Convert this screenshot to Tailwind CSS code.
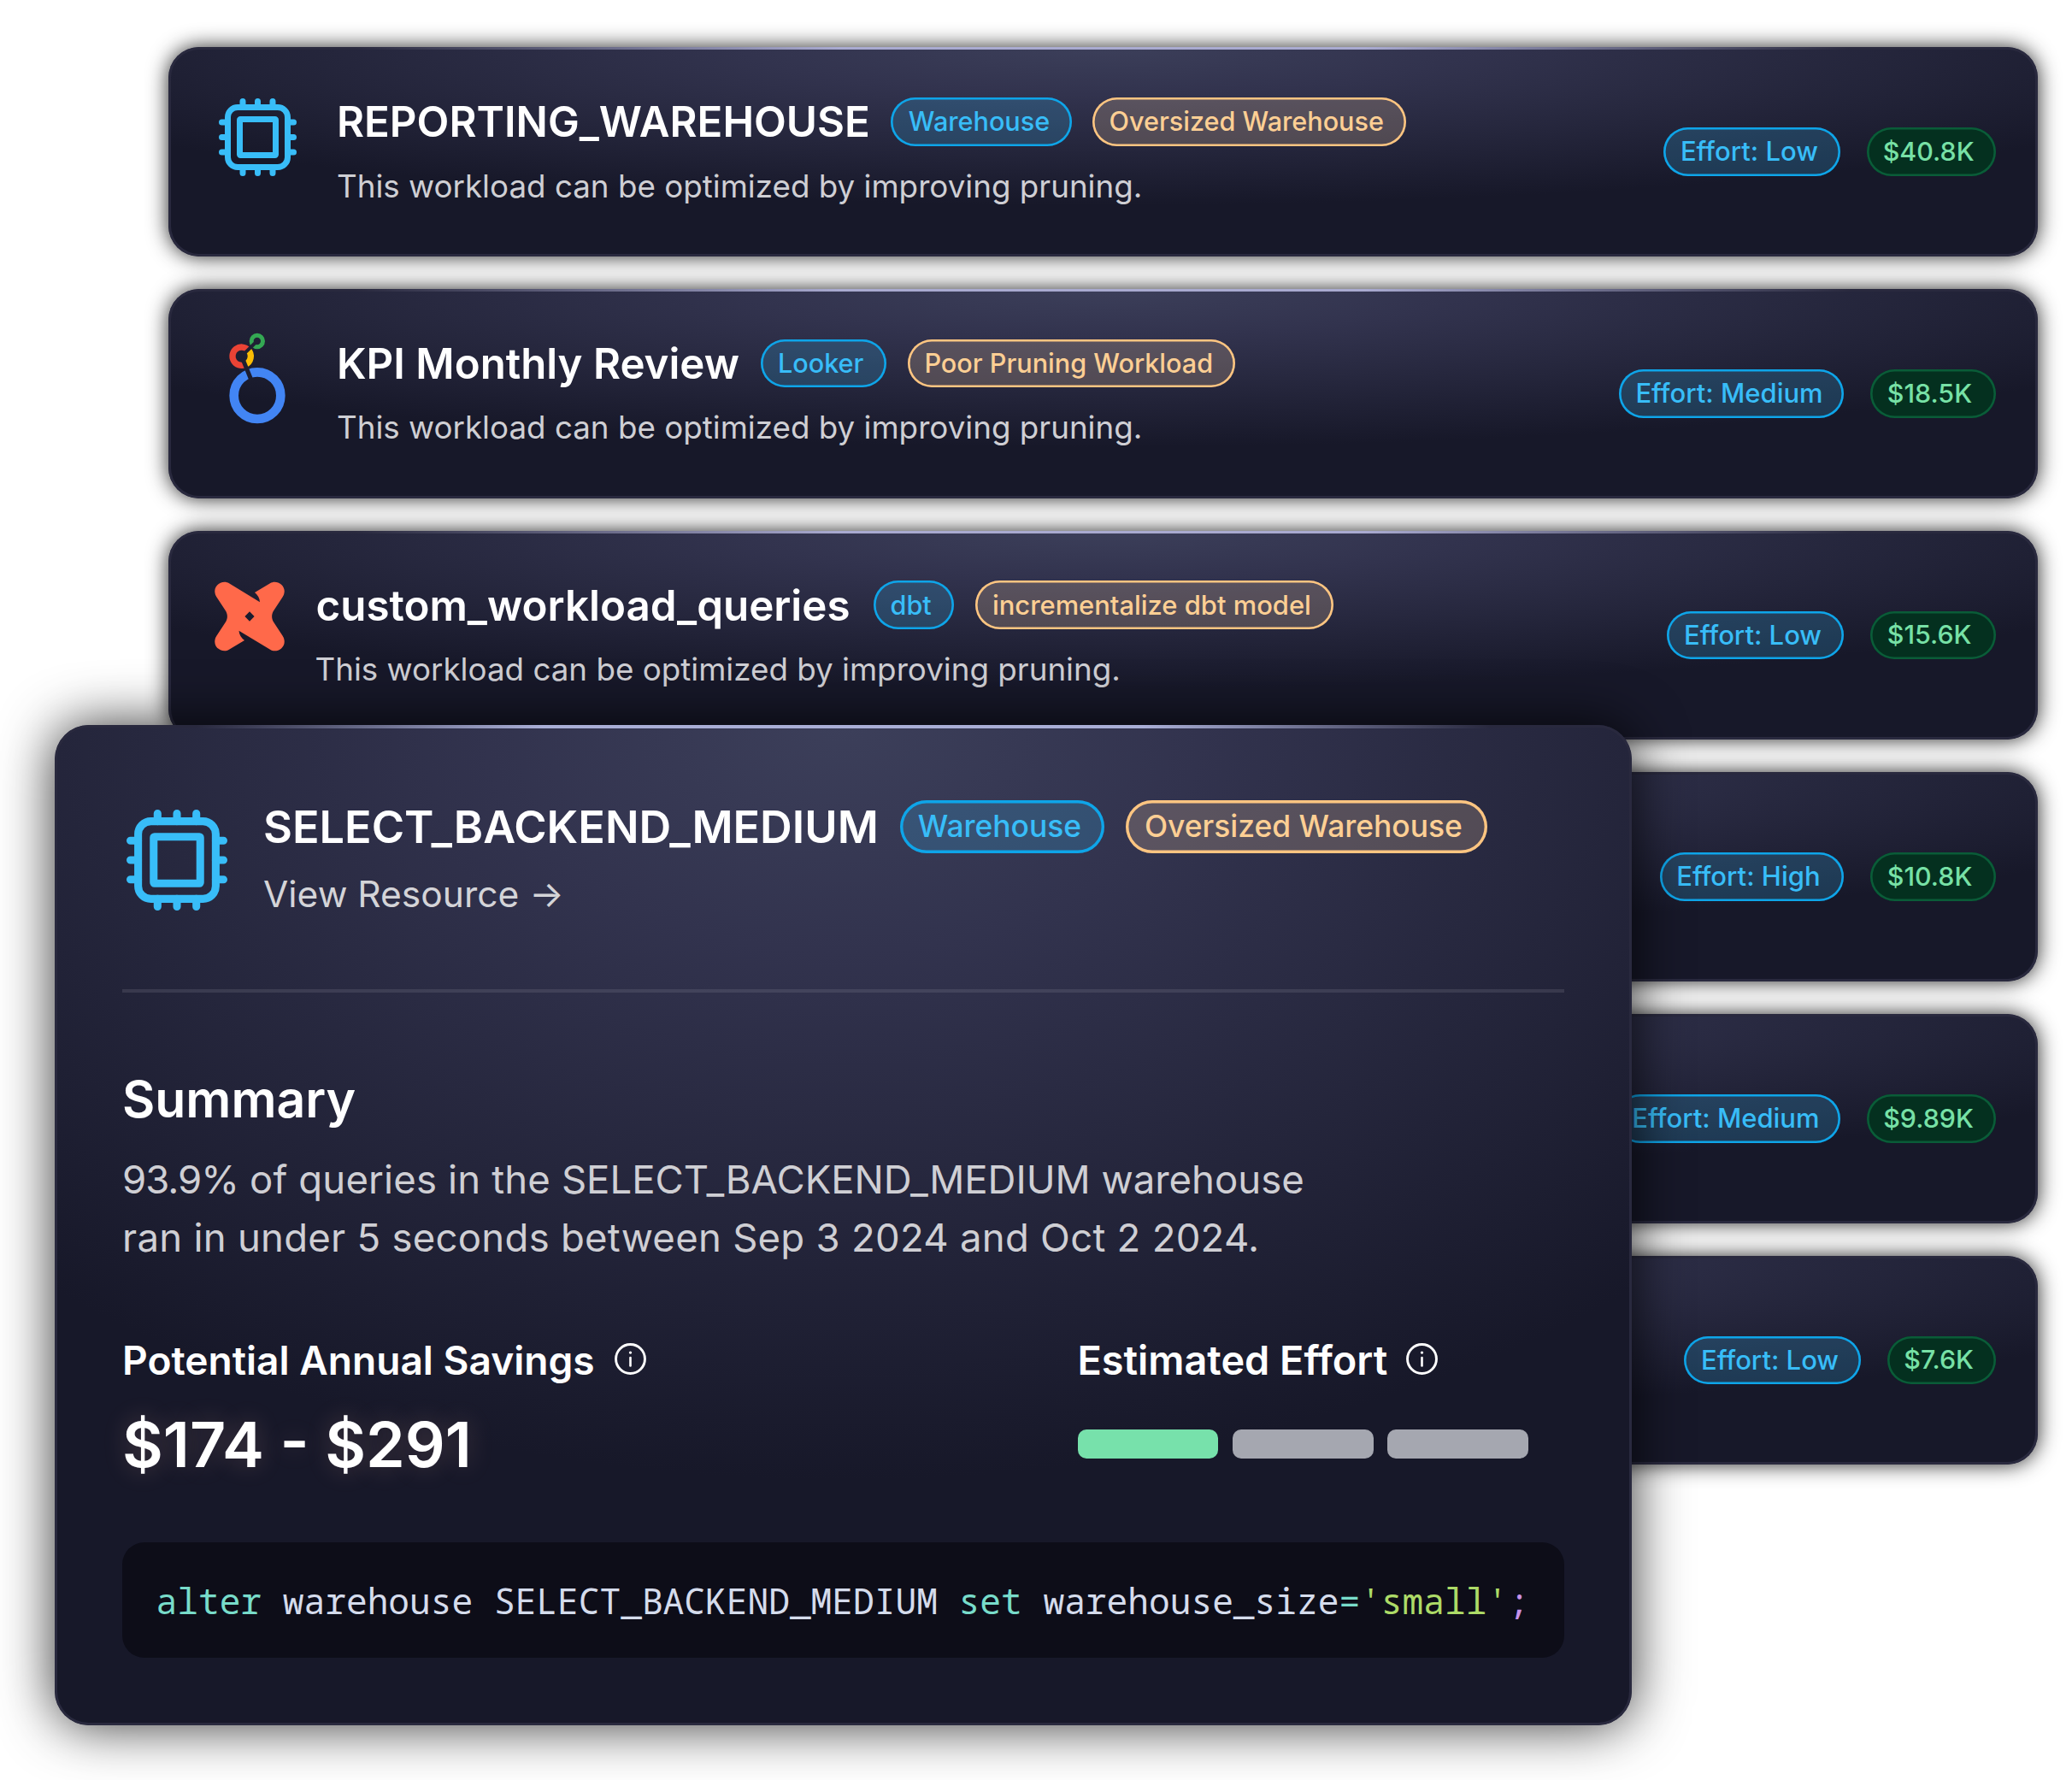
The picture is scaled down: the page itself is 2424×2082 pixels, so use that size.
<!DOCTYPE html>
<html lang="en">
<head>
<meta charset="utf-8">
<title>Recommendations</title>
<script src="https://cdn.jsdelivr.net/npm/@tailwindcss/browser@4"></script>
</head>
<body class="relative h-[2082px] w-[2424px] overflow-hidden bg-white font-['Inter',sans-serif]">

<svg class="hidden">
  <symbol id="chip" viewBox="0 0 26 26">
    <g fill="none" stroke="#38bdf8" stroke-width="2">
      <rect x="3" y="3" width="20" height="20" rx="3.3"/>
      <rect x="7" y="7" width="12" height="12" rx="0.2" stroke-linejoin="round"/>
      <path stroke-linecap="round" d="M8 1v2M13 1v2M18 1v2M8 23v2M13 23v2M18 23v2M1 8h2M1 13h2M1 18h2M23 8h2M23 13h2M23 18h2"/>
    </g>
  </symbol>
  <symbol id="info" viewBox="0 0 24 24">
    <circle cx="12" cy="12" r="11" fill="none" stroke="#fff" stroke-width="1.9"/>
    <path d="M12 11v6.2" stroke="#fff" stroke-width="1.7" stroke-linecap="round"/>
    <circle cx="12" cy="7.2" r="1.1" fill="#fff"/>
  </symbol>
</svg>

<main class="flex flex-col gap-[38px] pt-[55.3px] pl-[197px]">

  <article class="relative flex h-[244.7px] w-[2187.3px] items-start overflow-hidden rounded-[36px] bg-[radial-gradient(64%_75.5%_at_50%_0%,#3c3f5a_0%,#32334e_30%,#171829_100%)] pr-[49px] pl-[59px] shadow-[0_0_24px_rgba(0,0,0,0.85),inset_0_0_0_3px_#29293e]">
    <div class="absolute inset-x-0 top-0 h-[3px] bg-[linear-gradient(90deg,transparent_10%,#a9aad0_36%,#a9aad0_64%,transparent_90%)]"></div>
    <svg class="mt-[59.5px] h-[91px] w-[91px] shrink-0"><use href="#chip"/></svg>
    <div class="mt-[58.7px] ml-[47px]">
      <div class="flex items-center gap-[24.5px]">
        <h2 class="text-[49.2px] leading-[56px] font-semibold whitespace-nowrap text-white">REPORTING_WAREHOUSE</h2>
        <span class="flex h-[56.800px] w-[211.200px] items-center rounded-full bg-[#38bdf8]/20 pl-[20.500px] text-[30.6px] font-medium whitespace-nowrap text-[#38bdf8] shadow-[inset_0_0_0_2.600px_#0ea5e9]">Warehouse</span>
        <span class="flex h-[56.800px] w-[367px] items-center rounded-full bg-[#fed7aa]/20 pl-[19.500px] text-[30.6px] font-medium whitespace-nowrap text-[#fdcf94] shadow-[inset_0_0_0_2.600px_#fdc581]">Oversized Warehouse</span>
      </div>
      <p class="mt-[24.8px] text-[36.75px] leading-[44px] whitespace-nowrap text-[#cfcfd4]">This workload can be optimized by improving pruning.</p>
    </div>
    <div class="ml-auto flex items-center gap-[30.6px] self-center">
      <span class="flex h-[56.800px] w-[207px] items-center rounded-full bg-[#38bdf8]/20 pl-[19.800px] text-[31px] font-medium whitespace-nowrap text-[#38bdf8] shadow-[inset_0_0_0_2.600px_#0ea5e9]">Effort: Low</span>
      <span class="flex h-[56.800px] w-[151.6px] items-center rounded-full bg-[#04301f] pl-[19px] text-[30.4px] font-medium whitespace-nowrap text-[#77e1a6] shadow-[inset_0_0_0_2.600px_#0a5c38]">$40.8K</span>
    </div>
  </article>

  <article class="relative flex h-[244.7px] w-[2187.3px] items-start overflow-hidden rounded-[36px] bg-[radial-gradient(64%_75.5%_at_50%_0%,#3c3f5a_0%,#32334e_30%,#171829_100%)] pr-[49px] pl-[59px] shadow-[0_0_24px_rgba(0,0,0,0.85),inset_0_0_0_3px_#29293e]">
    <div class="absolute inset-x-0 top-0 h-[3px] bg-[linear-gradient(90deg,transparent_10%,#a9aad0_36%,#a9aad0_64%,transparent_90%)]"></div>
    <svg class="mt-[32px] h-[140px] w-[91px] shrink-0" viewBox="48 0 273 420">
      <mask id="gap" maskUnits="userSpaceOnUse" x="0" y="0" width="360" height="420">
        <rect width="360" height="420" fill="#fff"/>
        <path d="M128 140L182 87" stroke="#000" stroke-width="12"/>
        <path d="M130 145L160 219" stroke="#000" stroke-width="15"/>
      </mask>
      <g fill="none" mask="url(#gap)">
        <circle cx="183" cy="278" r="82" stroke="#4285f4" stroke-width="32"/>
        <path d="M150.6 117.4A32 32 0 1 0 140 169.7" stroke="#ea4335" stroke-width="22"/>
        <path d="M150.6 117.4A32 32 0 0 1 140 169.7" stroke="#fbbc04" stroke-width="22"/>
        <circle cx="182.5" cy="87" r="20" stroke="#34a853" stroke-width="15"/>
      </g>
    </svg>
    <div class="mt-[58.7px] ml-[47px]">
      <div class="flex items-center gap-[25px]">
        <h2 class="text-[49.2px] leading-[56px] font-semibold whitespace-nowrap text-white">KPI Monthly Review</h2>
        <span class="flex h-[56.800px] w-[147px] items-center rounded-full bg-[#38bdf8]/20 pl-[20px] text-[30.6px] font-medium whitespace-nowrap text-[#38bdf8] shadow-[inset_0_0_0_2.600px_#0ea5e9]">Looker</span>
        <span class="flex h-[56.800px] w-[383px] items-center rounded-full bg-[#fed7aa]/20 pl-[19.500px] text-[30.6px] font-medium whitespace-nowrap text-[#fdcf94] shadow-[inset_0_0_0_2.600px_#fdc581]">Poor Pruning Workload</span>
      </div>
      <p class="mt-[24.8px] text-[36.75px] leading-[44px] whitespace-nowrap text-[#cfcfd4]">This workload can be optimized by improving pruning.</p>
    </div>
    <div class="ml-auto flex items-center gap-[30.6px] self-center">
      <span class="flex h-[56.800px] w-[263px] items-center rounded-full bg-[#38bdf8]/20 pl-[19.200px] text-[31px] font-medium whitespace-nowrap text-[#38bdf8] shadow-[inset_0_0_0_2.600px_#0ea5e9]">Effort: Medium</span>
      <span class="flex h-[56.800px] w-[147.5px] items-center rounded-full bg-[#04301f] pl-[20px] text-[30.4px] font-medium whitespace-nowrap text-[#77e1a6] shadow-[inset_0_0_0_2.600px_#0a5c38]">$18.5K</span>
    </div>
  </article>

  <article class="relative flex h-[244.7px] w-[2187.3px] items-start overflow-hidden rounded-[36px] bg-[radial-gradient(64%_75.5%_at_50%_0%,#3c3f5a_0%,#32334e_30%,#171829_100%)] pr-[49px] pl-[54px] shadow-[0_0_24px_rgba(0,0,0,0.85),inset_0_0_0_3px_#29293e]">
    <div class="absolute inset-x-0 top-0 h-[3px] bg-[linear-gradient(90deg,transparent_10%,#a9aad0_36%,#a9aad0_64%,transparent_90%)]"></div>
    <svg class="mt-[59.5px] h-[82px] w-[82px] shrink-0" viewBox="0 0 82 82">
      <path fill="#ff694a" fill-rule="evenodd" d="M17 2.2L53 24.2Q52.6 17.5 47 13L65 2.2C72-2.5 83.5 4 81.5 13.5C81.2 15.500 80.500 17 79.500 18.500L69 34.500C66.500 38.500 66.500 43.500 69 47.500L79.500 63.500C80.500 65 81.200 66.500 81.500 68.500C83.500 78 72 84.500 65 79.800L28.500 57.800Q29 64.500 35 69L17 79.800C10 84.500-1.500 78 .5 68.500C.8 66.500 1.500 65 2.500 63.500L13 47.500C15.500 43.500 15.500 38.500 13 34.500L2.500 18.500C1.500 17 .8 15.500 .5 13.500C-1.500 4 10-2.500 17 2.200ZM41 35.300L35.400 41L41 46.700L46.600 41Z"/>
    </svg>
    <div class="mt-[58.7px] ml-[35.5px]">
      <div class="flex items-center gap-[25px]">
        <h2 class="mr-[2.500px] pl-[1px] text-[49.3px] leading-[56px] font-semibold whitespace-nowrap text-white">custom_workload_queries</h2>
        <span class="flex h-[56.800px] w-[94.500px] items-center rounded-full bg-[#38bdf8]/20 pl-[19.500px] text-[30.6px] font-medium whitespace-nowrap text-[#38bdf8] shadow-[inset_0_0_0_2.600px_#0ea5e9]">dbt</span>
        <span class="flex h-[56.800px] w-[419px] items-center rounded-full bg-[#fed7aa]/20 pl-[19.500px] text-[30.9px] font-medium whitespace-nowrap text-[#fdcf94] shadow-[inset_0_0_0_2.600px_#fdc581]">incrementalize dbt model</span>
      </div>
      <p class="mt-[24.8px] text-[36.75px] leading-[44px] whitespace-nowrap text-[#cfcfd4]">This workload can be optimized by improving pruning.</p>
    </div>
    <div class="ml-auto flex items-center gap-[30.6px] self-center">
      <span class="flex h-[56.800px] w-[207px] items-center rounded-full bg-[#38bdf8]/20 pl-[19.800px] text-[31px] font-medium whitespace-nowrap text-[#38bdf8] shadow-[inset_0_0_0_2.600px_#0ea5e9]">Effort: Low</span>
      <span class="flex h-[56.800px] w-[147.5px] items-center rounded-full bg-[#04301f] pl-[20px] text-[30.4px] font-medium whitespace-nowrap text-[#77e1a6] shadow-[inset_0_0_0_2.600px_#0a5c38]">$15.6K</span>
    </div>
  </article>

  <article class="relative flex h-[244.7px] w-[2187.3px] items-start overflow-hidden rounded-[36px] bg-[radial-gradient(64%_75.5%_at_50%_0%,#3c3f5a_0%,#32334e_30%,#171829_100%)] pr-[49px] shadow-[0_0_24px_rgba(0,0,0,0.85),inset_0_0_0_3px_#29293e]">
    <div class="ml-auto flex items-center gap-[30.6px] self-center">
      <span class="flex h-[56.800px] w-[215.500px] items-center rounded-full bg-[#38bdf8]/20 pl-[19.500px] text-[31px] font-medium whitespace-nowrap text-[#38bdf8] shadow-[inset_0_0_0_2.600px_#0ea5e9]">Effort: High</span>
      <span class="flex h-[56.800px] w-[147.5px] items-center rounded-full bg-[#04301f] pl-[20px] text-[30.4px] font-medium whitespace-nowrap text-[#77e1a6] shadow-[inset_0_0_0_2.600px_#0a5c38]">$10.8K</span>
    </div>
  </article>

  <article class="relative flex h-[244.7px] w-[2187.3px] items-start overflow-hidden rounded-[36px] bg-[radial-gradient(64%_75.5%_at_50%_0%,#3c3f5a_0%,#32334e_30%,#171829_100%)] pr-[49px] shadow-[0_0_24px_rgba(0,0,0,0.85),inset_0_0_0_3px_#29293e]">
    <div class="ml-auto flex items-center gap-[30.6px] self-center">
      <span class="flex h-[56.800px] w-[263px] items-center rounded-full bg-[#38bdf8]/20 pl-[19.200px] text-[31px] font-medium whitespace-nowrap text-[#38bdf8] shadow-[inset_0_0_0_2.600px_#0ea5e9]">Effort: Medium</span>
      <span class="flex h-[56.800px] w-[151.6px] items-center rounded-full bg-[#04301f] pl-[19.500px] text-[30.4px] font-medium whitespace-nowrap text-[#77e1a6] shadow-[inset_0_0_0_2.600px_#0a5c38]">$9.89K</span>
    </div>
  </article>

  <article class="relative flex h-[244.7px] w-[2187.3px] items-start overflow-hidden rounded-[36px] bg-[radial-gradient(64%_75.5%_at_50%_0%,#3c3f5a_0%,#32334e_30%,#171829_100%)] pr-[49px] shadow-[0_0_24px_rgba(0,0,0,0.85),inset_0_0_0_3px_#29293e]">
    <div class="ml-auto flex items-center gap-[30.6px] self-center">
      <span class="flex h-[56.800px] w-[207px] items-center rounded-full bg-[#38bdf8]/20 pl-[19.800px] text-[31px] font-medium whitespace-nowrap text-[#38bdf8] shadow-[inset_0_0_0_2.600px_#0ea5e9]">Effort: Low</span>
      <span class="flex h-[56.800px] w-[127.5px] items-center rounded-full bg-[#04301f] pl-[19.500px] text-[30.4px] font-medium whitespace-nowrap text-[#77e1a6] shadow-[inset_0_0_0_2.600px_#0a5c38]">$7.6K</span>
    </div>
  </article>
</main>

<!-- Detail card floating over the list -->
<section class="absolute top-[848px] left-[64px] h-[1169.5px] w-[1845px] overflow-hidden rounded-[40px] bg-[radial-gradient(75.5%_75.5%_at_50%_0%,#3c3f5a_0%,#32334e_30%,#171829_100%)] pr-[79px] pl-[79px] pt-[88.3px] shadow-[0_0_64px_rgba(0,0,0,0.8),inset_0_0_0_3px_#29293e]">
  <div class="absolute inset-x-0 top-0 h-[4px] bg-[linear-gradient(90deg,transparent_9%,#a9aed6_31%,#a9aed6_69%,transparent_91%)]"></div>

  <header class="flex items-start pl-[5px]">
    <svg class="mt-[10.4px] h-[118px] w-[118px] shrink-0"><use href="#chip"/></svg>
    <div class="ml-[42px]">
      <div class="flex items-center gap-[25.5px]">
        <h1 class="text-[52.2px] leading-[60px] font-semibold whitespace-nowrap text-white">SELECT_BACKEND_MEDIUM</h1>
        <span class="flex h-[61.4px] w-[238.7px] items-center rounded-full bg-[#38bdf8]/20 pl-[20.500px] text-[35.4px] font-medium whitespace-nowrap text-[#38bdf8] shadow-[inset_0_0_0_3.400px_#0ea5e9]">Warehouse</span>
        <span class="flex h-[61.4px] w-[422.6px] items-center rounded-full bg-[#fed7aa]/20 pl-[21.500px] text-[35.4px] font-medium whitespace-nowrap text-[#fdcf94] shadow-[inset_0_0_0_3.400px_#fdc581]">Oversized Warehouse</span>
      </div>
      <a class="mt-[23.3px] block text-[42.5px] leading-[50px] whitespace-nowrap text-[#d4d4d8]">View Resource →</a>
    </div>
  </header>

  <div class="mt-[86px] h-[4px] bg-[#90909f]/20"></div>

  <h2 class="mt-[89.3px] text-[58.9px] leading-[72px] font-semibold text-white">Summary</h2>
  <p class="mt-[24px] text-[45.5px] leading-[68px] whitespace-nowrap text-[#cfcfd4]"><span class="tracking-[-1px]">93.9%</span><span class="tracking-[0.150px]"> of queries in the </span>SELECT_BACKEND_MEDIUM warehouse<br><span class="tracking-[0.260px]">ran in under 5 seconds between Sep 3 2024 and Oct 2 2024.</span></p>

  <div class="mt-[80.8px] flex">
    <div class="w-[1117.500px]">
      <div class="flex items-center gap-[23.500px]">
        <h3 class="text-[46.1px] leading-[56px] font-semibold whitespace-nowrap text-white">Potential Annual Savings</h3>
        <svg class="-mt-[3px] h-[37px] w-[37px]"><use href="#info"/></svg>
      </div>
      <div class="mt-[26.500px] mb-[1px] text-[73.500px] leading-[88px] font-semibold whitespace-nowrap text-white [text-shadow:0_0_30px_rgba(255,190,170,0.2)]">$174 - $291</div>
    </div>
    <div>
      <div class="flex items-center gap-[22px]">
        <h3 class="text-[46.8px] leading-[56px] font-semibold whitespace-nowrap text-white">Estimated Effort</h3>
        <svg class="-mt-[3px] h-[37px] w-[37px]"><use href="#info"/></svg>
      </div>
      <div class="mt-[53.200px] flex gap-[16.5px]">
        <div class="h-[33.500px] w-[164.800px] rounded-[10px] bg-[#77e1ab]"></div>
        <div class="h-[33.500px] w-[164.800px] rounded-[10px] bg-[#a5a7b0]"></div>
        <div class="h-[33.500px] w-[164.800px] rounded-[10px] bg-[#a5a7b0]"></div>
      </div>
    </div>
  </div>

  <pre class="mt-[69.400px] flex h-[135.300px] items-center rounded-[26px] bg-[#0d0d18] pl-[39.500px] text-[41.2px] leading-[60px] text-[#d5dcec]"><code class="font-['Noto_Sans_Mono','DejaVu_Sans_Mono',monospace]"><span class="text-[#78dcca]">alter</span> warehouse SELECT_BACKEND_MEDIUM <span class="text-[#78dcca]">set</span> warehouse_size<span class="text-[#78dcca]">=</span><span class="text-[#addb67]">'small'</span><span class="text-[#c792ea]">;</span></code></pre>
</section>

</body>
</html>
